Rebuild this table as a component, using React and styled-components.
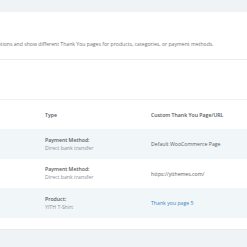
import React from 'react';
import styled, { createGlobalStyle } from 'styled-components';

const GlobalStyle = createGlobalStyle`
  html, body {
    margin: 0;
    padding: 0;
    background: #f0f3f6;
    overflow: hidden;
    font-family: 'Open Sans', 'Liberation Sans', sans-serif;
  }
`;

const rules = [
  { label: 'Payment Method:', value: 'Direct bank transfer', page: 'Default WooCommerce Page' },
  { label: 'Payment Method:', value: 'Direct bank transfer', page: 'https://yithemes.com/' },
  { label: 'Product:', value: 'YITH T-Shirt', page: 'Thank you page 5', link: true },
];

const Page = styled.div`
  padding-top: 12px;
  width: 247px;
  height: 247px;
  box-sizing: border-box;
`;

const Card = styled.div`
  background: #ffffff;
  border-bottom: 1px solid #e6ebef;
  padding-bottom: 11px;
`;

const Intro = styled.div`
  height: 48px;
  box-sizing: border-box;
  padding-top: 29px;
  border-bottom: 1px solid #e9eef1;
  overflow: hidden;
`;

const Description = styled.p`
  margin: 0 0 0 -75px;
  white-space: nowrap;
  font-size: 5.15px;
  line-height: 7px;
  color: #72767a;
`;

const Toolbar = styled.div`
  height: 39px;
  border-bottom: 1px solid #eef1f3;
`;

const Row = styled.div`
  display: grid;
  grid-template-columns: 106px 1fr;
  align-items: center;
  padding-left: 45px;
  height: ${p => p.h}px;
  background: ${p => (p.shaded ? '#f1f6f9' : '#ffffff')};
`;

const HeadCell = styled.div`
  font-size: 5.2px;
  font-weight: 600;
  color: #55595d;
`;

const Condition = styled.div`
  display: flex;
  flex-direction: column;
  gap: 1px;
`;

const Label = styled.span`
  font-size: 5.2px;
  line-height: 7px;
  font-weight: 600;
  color: #5a5e62;
`;

const Sub = styled.span`
  font-size: 5.2px;
  line-height: 7px;
  color: #8d9296;
`;

const Target = styled.span`
  font-size: 5.2px;
  color: ${p => (p.link ? '#3a86c4' : '#5a5e62')};
`;

export default function App() {
  const heights = [30, 29, 30];
  return (
    <Page>
      <GlobalStyle />
      <Card>
        <Intro>
          <Description>
            Set up rules with conditional options and show different Thank You pages for products, categories, or payment methods.
          </Description>
        </Intro>
        <Toolbar />
        <Row h={29}>
          <HeadCell>Type</HeadCell>
          <HeadCell>Custom Thank You Page/URL</HeadCell>
        </Row>
        {rules.map((r, i) => (
          <Row key={i} h={heights[i]} shaded={i % 2 === 0}>
            <Condition>
              <Label>{r.label}</Label>
              <Sub>{r.value}</Sub>
            </Condition>
            <Target link={r.link}>{r.page}</Target>
          </Row>
        ))}
      </Card>
    </Page>
  );
}
